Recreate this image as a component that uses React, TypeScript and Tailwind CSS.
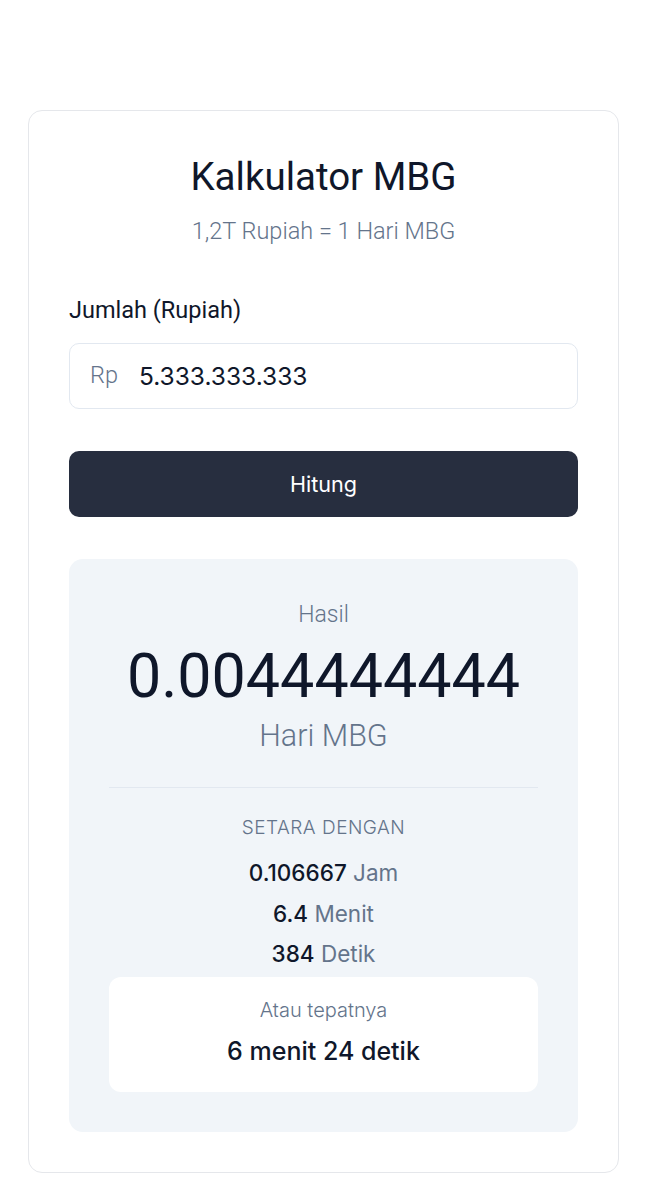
const stats = [
  { value: "0.106667", unit: "Jam" },
  { value: "6.4", unit: "Menit" },
  { value: "384", unit: "Detik" },
];

export default function App() {
  return (
    <div className="min-h-screen bg-white px-[28px] pt-[110px] pb-[28px] font-['Roboto',sans-serif] text-[#0f172a]">
      <div className="rounded-[14px] border border-[#e5e7eb] bg-white px-[40px] py-[40px]">
        <div className="text-center">
          <h1 className="text-[38.5px] leading-[52px] font-normal">Kalkulator MBG</h1>
          <p className="mt-[12px] text-[23.5px] leading-[32px] font-light text-[#64748b]">
            1,2T Rupiah = 1 Hari MBG
          </p>
        </div>

        <label className="mt-[47px] block text-[23.5px] leading-[32px]">Jumlah (Rupiah)</label>
        <div className="mt-[17px] flex h-[66px] items-center rounded-[10px] border border-[#e2e8f0] px-[20px]">
          <span className="text-[23.5px] font-light text-[#64748b]">Rp</span>
          <span className="ml-[21px] font-['Inter',sans-serif] text-[24.5px] text-[#0f172a]">5.333.333.333</span>
        </div>

        <button className="mt-[42px] flex h-[66px] w-full items-center justify-center rounded-[10px] bg-[#272e3f] font-['Inter',sans-serif] text-[21.6px] text-white">
          Hitung
        </button>

        <div className="mt-[42px] rounded-[14px] bg-[#f1f5f9] px-[40px] pt-[41px] pb-[40px] text-center">
          <p className="text-[23px] leading-[30px] font-light text-[#64748b]">Hasil</p>
          <p className="mt-[15px] text-[61px] leading-[62px]">0.0044444444</p>
          <p className="mt-[9px] text-[30.5px] leading-[40px] font-light text-[#64748b]">Hari MBG</p>

          <div className="mt-[31px] border-t border-[#e2e8f0]" />

          <p className="mt-[27px] font-['Inter',sans-serif] text-[19px] leading-[26px] font-light tracking-[0.5px] text-[#64748b]">
            SETARA DENGAN
          </p>
          <div className="mt-[17px] flex flex-col gap-[10px] font-['Inter',sans-serif] text-[22.5px] leading-[30.5px]">
            {stats.map((s) => (
              <p key={s.unit}>
                <span className="font-medium text-[#0f172a]">{s.value}</span>{" "}
                <span className="text-[#64748b]">{s.unit}</span>
              </p>
            ))}
          </div>

          <div className="mt-[7px] rounded-[12px] bg-white pt-[19px] pb-[23px] font-['Inter',sans-serif]">
            <p className="text-[20px] leading-[28px] font-light text-[#64748b]">Atau tepatnya</p>
            <p className="mt-[9px] text-[25px] leading-[36px] font-medium">6 menit 24 detik</p>
          </div>
        </div>
      </div>
    </div>
  );
}
